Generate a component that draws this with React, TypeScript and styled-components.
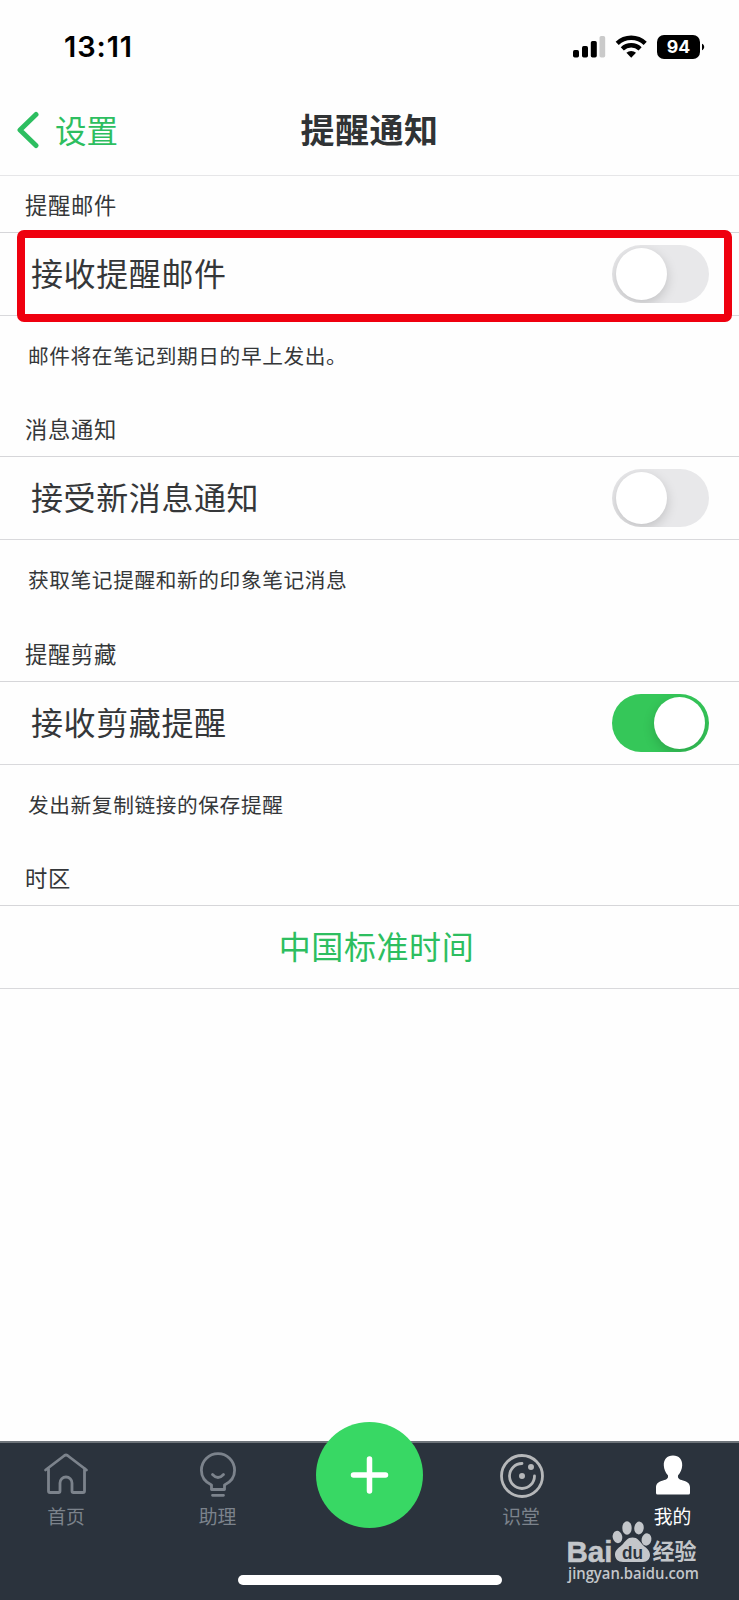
import React from "react";
import styled, { createGlobalStyle } from "styled-components";

const GlobalStyle = createGlobalStyle`
  * { box-sizing: border-box; }
  body {
    margin: 0;
    background: #fefefe;
    font-family: Inter, "Noto Sans CJK SC", sans-serif;
    color: #353739;
  }
`;

const Screen = styled.div`
  width: 739px;
  height: 1600px;
  display: flex;
  flex-direction: column;
  background: #fefefe;
  position: relative;
  overflow: hidden;
`;

const StatusBar = styled.div`
  height: 88px;
  padding: 6px 34px 0 64px;
  display: flex;
  align-items: center;
  justify-content: space-between;
  color: #000;
`;

const Clock = styled.div`
  font: 600 29px/34px Inter, sans-serif;
  letter-spacing: 0.9px;
`;

const StatusIcons = styled.svg`
  display: block;
  width: 132px;
  height: 26px;
`;

const NavBar = styled.header`
  height: 88px;
  display: grid;
  grid-template-columns: 1fr auto 1fr;
  align-items: center;
  padding-bottom: 5px;
  border-bottom: 1px solid #e6e6e8;
`;

const BackButton = styled.button`
  display: flex;
  align-items: center;
  gap: 15px;
  padding: 0 0 0 16px;
  border: 0;
  background: none;
  color: #2dbe60;
  font: 400 31.5px/44px "Noto Sans CJK SC", sans-serif;
`;

const BackArrow = styled.svg`
  display: block;
  margin-top: 2px;
`;

const Title = styled.h1`
  margin: 0;
  font: 700 34px/44px "Noto Sans CJK SC", sans-serif;
  letter-spacing: 0.5px;
  color: #303335;
`;

const Content = styled.main`
  flex: 1;
`;

const Section = styled.section<{ $height: number }>`
  height: ${(p) => p.$height}px;
  display: flex;
  flex-direction: column;
`;

const SectionHeading = styled.h2`
  flex: none;
  height: 56px;
  margin: 0;
  padding: 12px 0 0 25px;
  font: 400 22.3px/32px "Noto Sans CJK SC", sans-serif;
  letter-spacing: 0.7px;
`;

const Row = styled.div<{ $center?: boolean }>`
  flex: none;
  height: 84px;
  display: flex;
  align-items: center;
  justify-content: ${(p) => (p.$center ? "center" : "space-between")};
  padding: ${(p) => (p.$center ? "0 0 0 14px" : "0 30px 0 31px")};
  border-top: 1px solid #d6d6d9;
  border-bottom: 1px solid #d9d9dc;
  font: 400 32px/44px "Noto Sans CJK SC", sans-serif;
  letter-spacing: 0.6px;
  color: ${(p) => (p.$center ? "#2dbe60" : "#353739")};
  position: relative;
`;

const RowLabel = styled.span`
  padding-bottom: 4px;
`;

const Hint = styled.p`
  margin: 0;
  padding: 24px 0 0 28px;
  font: 400 20.7px/30px "Noto Sans CJK SC", sans-serif;
  letter-spacing: 0.6px;
`;

const Highlight = styled.div`
  position: absolute;
  left: 17px;
  right: 7.500px;
  top: -3px;
  height: 92px;
  border: 8px solid #ef000f;
  border-radius: 7px;
`;

const Track = styled.span<{ $on: boolean }>`
  width: 97px;
  height: 58px;
  padding: 3px 4px;
  border-radius: 30px;
  display: flex;
  justify-content: ${(p) => (p.$on ? "flex-end" : "flex-start")};
  background: ${(p) => (p.$on ? "#35c759" : "#e8e8ea")};
  overflow: hidden;
`;

const Knob = styled.span`
  width: 51px;
  height: 52px;
  border-radius: 50%;
  background: #fff;
  box-shadow: 0 4px 12px rgba(0, 0, 0, 0.17);
`;

const TabBar = styled.nav`
  flex: none;
  height: 159px;
  display: grid;
  grid-template-columns: 132px 171px 133px 170px 133px;
  background: #2b333d;
  border-top: 2px solid #6e747a;
`;

const Tab = styled.div<{ $active?: boolean }>`
  display: flex;
  flex-direction: column;
  align-items: center;
  padding-top: 7px;
  color: ${(p) => (p.$active ? "#fff" : "#7c838c")};
  font: 400 18.8px/28px "Noto Sans CJK SC", sans-serif;
`;

const TabIcon = styled.svg<{ $tone?: string }>`
  display: block;
  width: 50px;
  height: 50px;
  margin-bottom: 2px;
  color: ${(p) => p.$tone ?? "inherit"};
  fill: none;
  stroke: currentColor;
  stroke-width: 2.8;
  stroke-linecap: round;
  stroke-linejoin: round;
`;

const AddButton = styled.button`
  justify-self: center;
  width: 107px;
  height: 106px;
  margin-top: -21px;
  padding: 0;
  border: 0;
  border-radius: 50%;
  background: #38d864;
  display: grid;
  place-items: center;
`;

const HomeIndicator = styled.div`
  position: absolute;
  left: 238px;
  bottom: 15px;
  width: 264px;
  height: 10px;
  border-radius: 5px;
  background: #fff;
`;

const Watermark = styled.svg`
  position: absolute;
  left: 560px;
  top: 1516px;
  width: 145px;
  height: 75px;
  fill: #c3c6ca;
`;

const Toggle = ({ on = false }: { on?: boolean }) => (
  <Track $on={on} role="switch" aria-checked={on}>
    <Knob />
  </Track>
);

type Setting = { heading: string; label: string; hint: string; on?: boolean; marked?: boolean; height: number };

const settings: Setting[] = [
  { heading: "提醒邮件", label: "接收提醒邮件", hint: "邮件将在笔记到期日的早上发出。", marked: true, height: 224 },
  { heading: "消息通知", label: "接受新消息通知", hint: "获取笔记提醒和新的印象笔记消息", height: 225 },
  { heading: "提醒剪藏", label: "接收剪藏提醒", hint: "发出新复制链接的保存提醒", on: true, height: 224 },
];

export default function App() {
  return (
    <Screen>
      <GlobalStyle />
      <StatusBar>
        <Clock>13:11</Clock>
        <StatusIcons viewBox="0 0 132 26">
          <rect x="0" y="16" width="6" height="7.5" rx="1.7" />
          <rect x="9" y="12" width="6" height="11.5" rx="1.7" />
          <rect x="17.8" y="7" width="6" height="16.5" rx="1.7" />
          <rect x="26.5" y="2" width="5.7" height="21.5" rx="1.7" fill="#cacaca" />
          <g fill="none" stroke="#000" strokeWidth="4.5">
            <path d="M44.2 9.300a20.3 20.3 0 0 1 28 0" />
            <path d="M49.300 14.800a13 13 0 0 1 17.800 0" />
          </g>
          <path d="M53.4 18.8a7 7 0 0 1 9.6 0l-4.8 4.9z" />
          <rect x="84" y="1" width="43" height="24" rx="7" />
          <path d="M129 9.8c2.9 1 2.9 5.4 0 6.400z" />
          <text x="93.700" y="19.200" fill="#fff" fontFamily="Inter" fontWeight="700" fontSize="17.500" textLength="23.500" lengthAdjust="spacingAndGlyphs">94</text>
        </StatusIcons>
      </StatusBar>
      <NavBar>
        <BackButton>
          <BackArrow width="24" height="38" viewBox="0 0 24 38" fill="none" stroke="currentColor" strokeWidth="5" strokeLinecap="round" strokeLinejoin="round">
            <path d="M20 3.500 4 19l16 15.500" />
          </BackArrow>
          设置
        </BackButton>
        <Title>提醒通知</Title>
      </NavBar>
      <Content>
        {settings.map((s) => (
          <Section key={s.heading} $height={s.height}>
            <SectionHeading>{s.heading}</SectionHeading>
            <Row>
              <RowLabel>{s.label}</RowLabel>
              <Toggle on={s.on} />
              {s.marked && <Highlight />}
            </Row>
            <Hint>{s.hint}</Hint>
          </Section>
        ))}
        <Section $height={140}>
          <SectionHeading>时区</SectionHeading>
          <Row $center>
            <RowLabel>中国标准时间</RowLabel>
          </Row>
        </Section>
      </Content>
      <TabBar>
        <Tab>
          <TabIcon viewBox="0 0 50 50">
            <path d="M4.500 20 23.500 5.500q1.500-1 3 0L45.500 20M7.500 18.500V41q0 1.500 1.500 1.500h8.500q1.500 0 1.500-1.500v-8a6 6 0 0 1 12 0v8q0 1.500 1.500 1.500H42q1.500 0 1.500-1.500V18.500" />
          </TabIcon>
          首页
        </Tab>
        <Tab>
          <TabIcon viewBox="0 0 50 50">
            <path d="M18.500 39.500v-4.500C12 32 8.400 27.500 8.400 20.300a16.600 16.600 0 0 1 33.200 0C41.600 27.500 38 32 31.500 35v4.500zM19.500 45.300h11M19.500 24.500q5.500 6 11 0" />
          </TabIcon>
          助理
        </Tab>
        <AddButton aria-label="+">
          <svg width="39" height="38" viewBox="0 0 39 38" stroke="#fff" strokeWidth="5.500" strokeLinecap="round">
            <path d="M19.500 3v32M3.500 19h32" />
          </svg>
        </AddButton>
        <Tab>
          <TabIcon viewBox="0 0 50 50" $tone="#b5b7b9">
            <circle cx="26" cy="26" r="20.500" />
            <path d="M26 13.500A12.500 12.500 0 1 0 38.500 26" />
            <circle cx="26" cy="26" r="1.600" fill="currentColor" />
            <circle cx="35" cy="17" r="1.600" fill="currentColor" />
          </TabIcon>
          识堂
        </Tab>
        <Tab $active>
          <TabIcon viewBox="0 0 50 50">
            <path fill="currentColor" stroke="none" d="M25 5.500c6 0 9.500 4 9.200 10-.2 4-1.700 7-4.100 9.800-.7 3 1 4.200 4.900 5.200 4.500 1.200 7 3 7 7V43q0 1.500-1.500 1.500h-31Q8 44.500 8 43v-5.500c0-4 2.500-5.800 7-7 3.900-1 5.600-2.200 4.900-5.200-2.400-2.800-3.900-5.800-4.100-9.800-.3-6 3.200-10 9.200-10z" />
          </TabIcon>
          我的
        </Tab>
      </TabBar>
      <HomeIndicator />
      <Watermark viewBox="0 0 145 75">
        <text x="6.500" y="45.500" fontFamily="Liberation Sans" fontWeight="700" fontSize="29.500" stroke="#c3c6ca" strokeWidth="0.500" textLength="46" lengthAdjust="spacingAndGlyphs">Bai</text>
        <ellipse cx="57.500" cy="21" rx="4.800" ry="6.200" transform="rotate(-12 57.500 21)" />
        <ellipse cx="67" cy="12" rx="4.700" ry="6.700" />
        <ellipse cx="79" cy="12" rx="4.700" ry="6.400" transform="rotate(8 79 12)" />
        <ellipse cx="86.500" cy="23.500" rx="4.900" ry="6.200" transform="rotate(12 86.500 23.500)" />
        <path d="M72.500 21.500c5 0 7 3.500 9.500 6.500 3 3.500 8 5.500 8 11 0 4-3 7-7 7H63c-5 0-8-3-8-7.500 0-5 4.500-7 8-10.500 2.500-3 4.500-6.500 9.500-6.500z" />
        <text x="62" y="42.500" fill="#2b333d" fontFamily="Liberation Sans" fontWeight="700" fontSize="18.500" textLength="21" lengthAdjust="spacingAndGlyphs">du</text>
        <text x="92.500" y="43" fontFamily="Noto Sans CJK SC" fontWeight="700" fontSize="22">经验</text>
        <text x="8" y="63" fontFamily="Open Sans" fontWeight="600" fontSize="15.500" textLength="131" lengthAdjust="spacingAndGlyphs">jingyan.baidu.com</text>
      </Watermark>
    </Screen>
  );
}
